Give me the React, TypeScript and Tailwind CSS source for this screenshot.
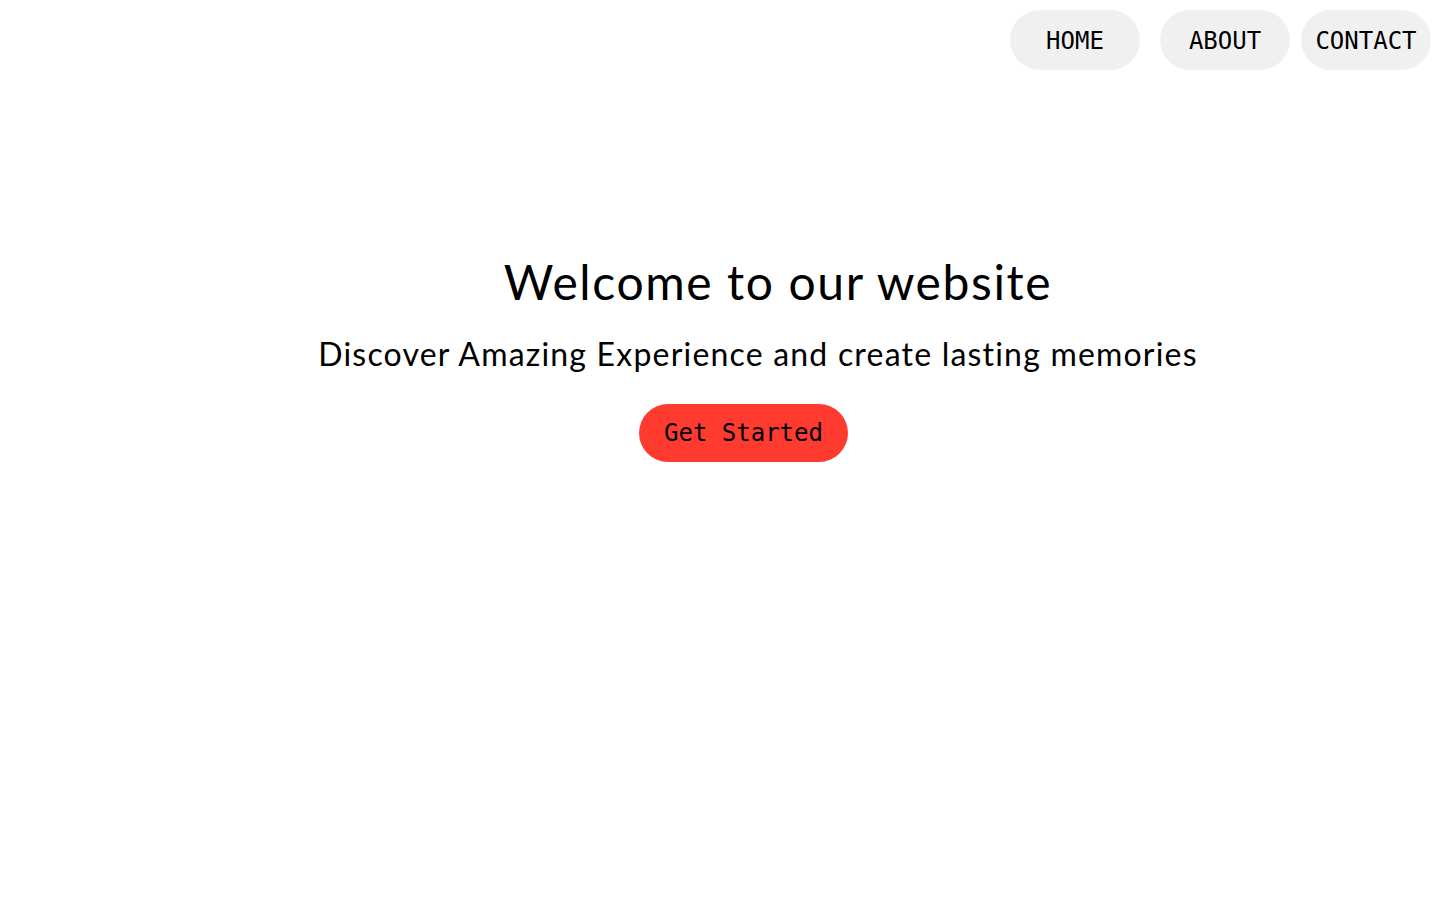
import React from "react";

export default function App() {
  const mono = { fontFamily: '"DejaVu Sans Mono", "Liberation Mono", monospace' };
  return (
    <div className="min-h-[900px] w-full bg-white text-black">
      <nav className="flex justify-end pt-[10px] pr-[9px]" style={mono}>
        <a className="flex h-[60px] w-[130px] items-center justify-center rounded-full bg-[#f0f0f0] pt-[2px] text-[24px]">HOME</a>
        <a className="ml-[20px] flex h-[60px] w-[130px] items-center justify-center rounded-full bg-[#f0f0f0] pt-[2px] text-[24px]">ABOUT</a>
        <a className="ml-[11px] flex h-[60px] w-[130px] items-center justify-center rounded-full bg-[#f0f0f0] pt-[2px] text-[24px]">CONTACT</a>
      </nav>
      <main className="flex flex-col items-center pt-[183px]" style={{ fontFamily: 'Lato, "Noto Sans", sans-serif' }}>
        <h1 className="ml-[116px] text-[48px] leading-[58px] font-normal tracking-[1.6px]">Welcome to our website</h1>
        <p className="ml-[76px] mt-[23px] text-[32px] leading-[40px] tracking-[1.2px]">Discover Amazing Experience and create lasting memories</p>
        <button className="ml-[47px] mt-[30px] flex h-[58px] w-[209px] items-center justify-center rounded-full bg-[#ff3b30] text-[24px]" style={mono}>Get Started</button>
      </main>
    </div>
  );
}
